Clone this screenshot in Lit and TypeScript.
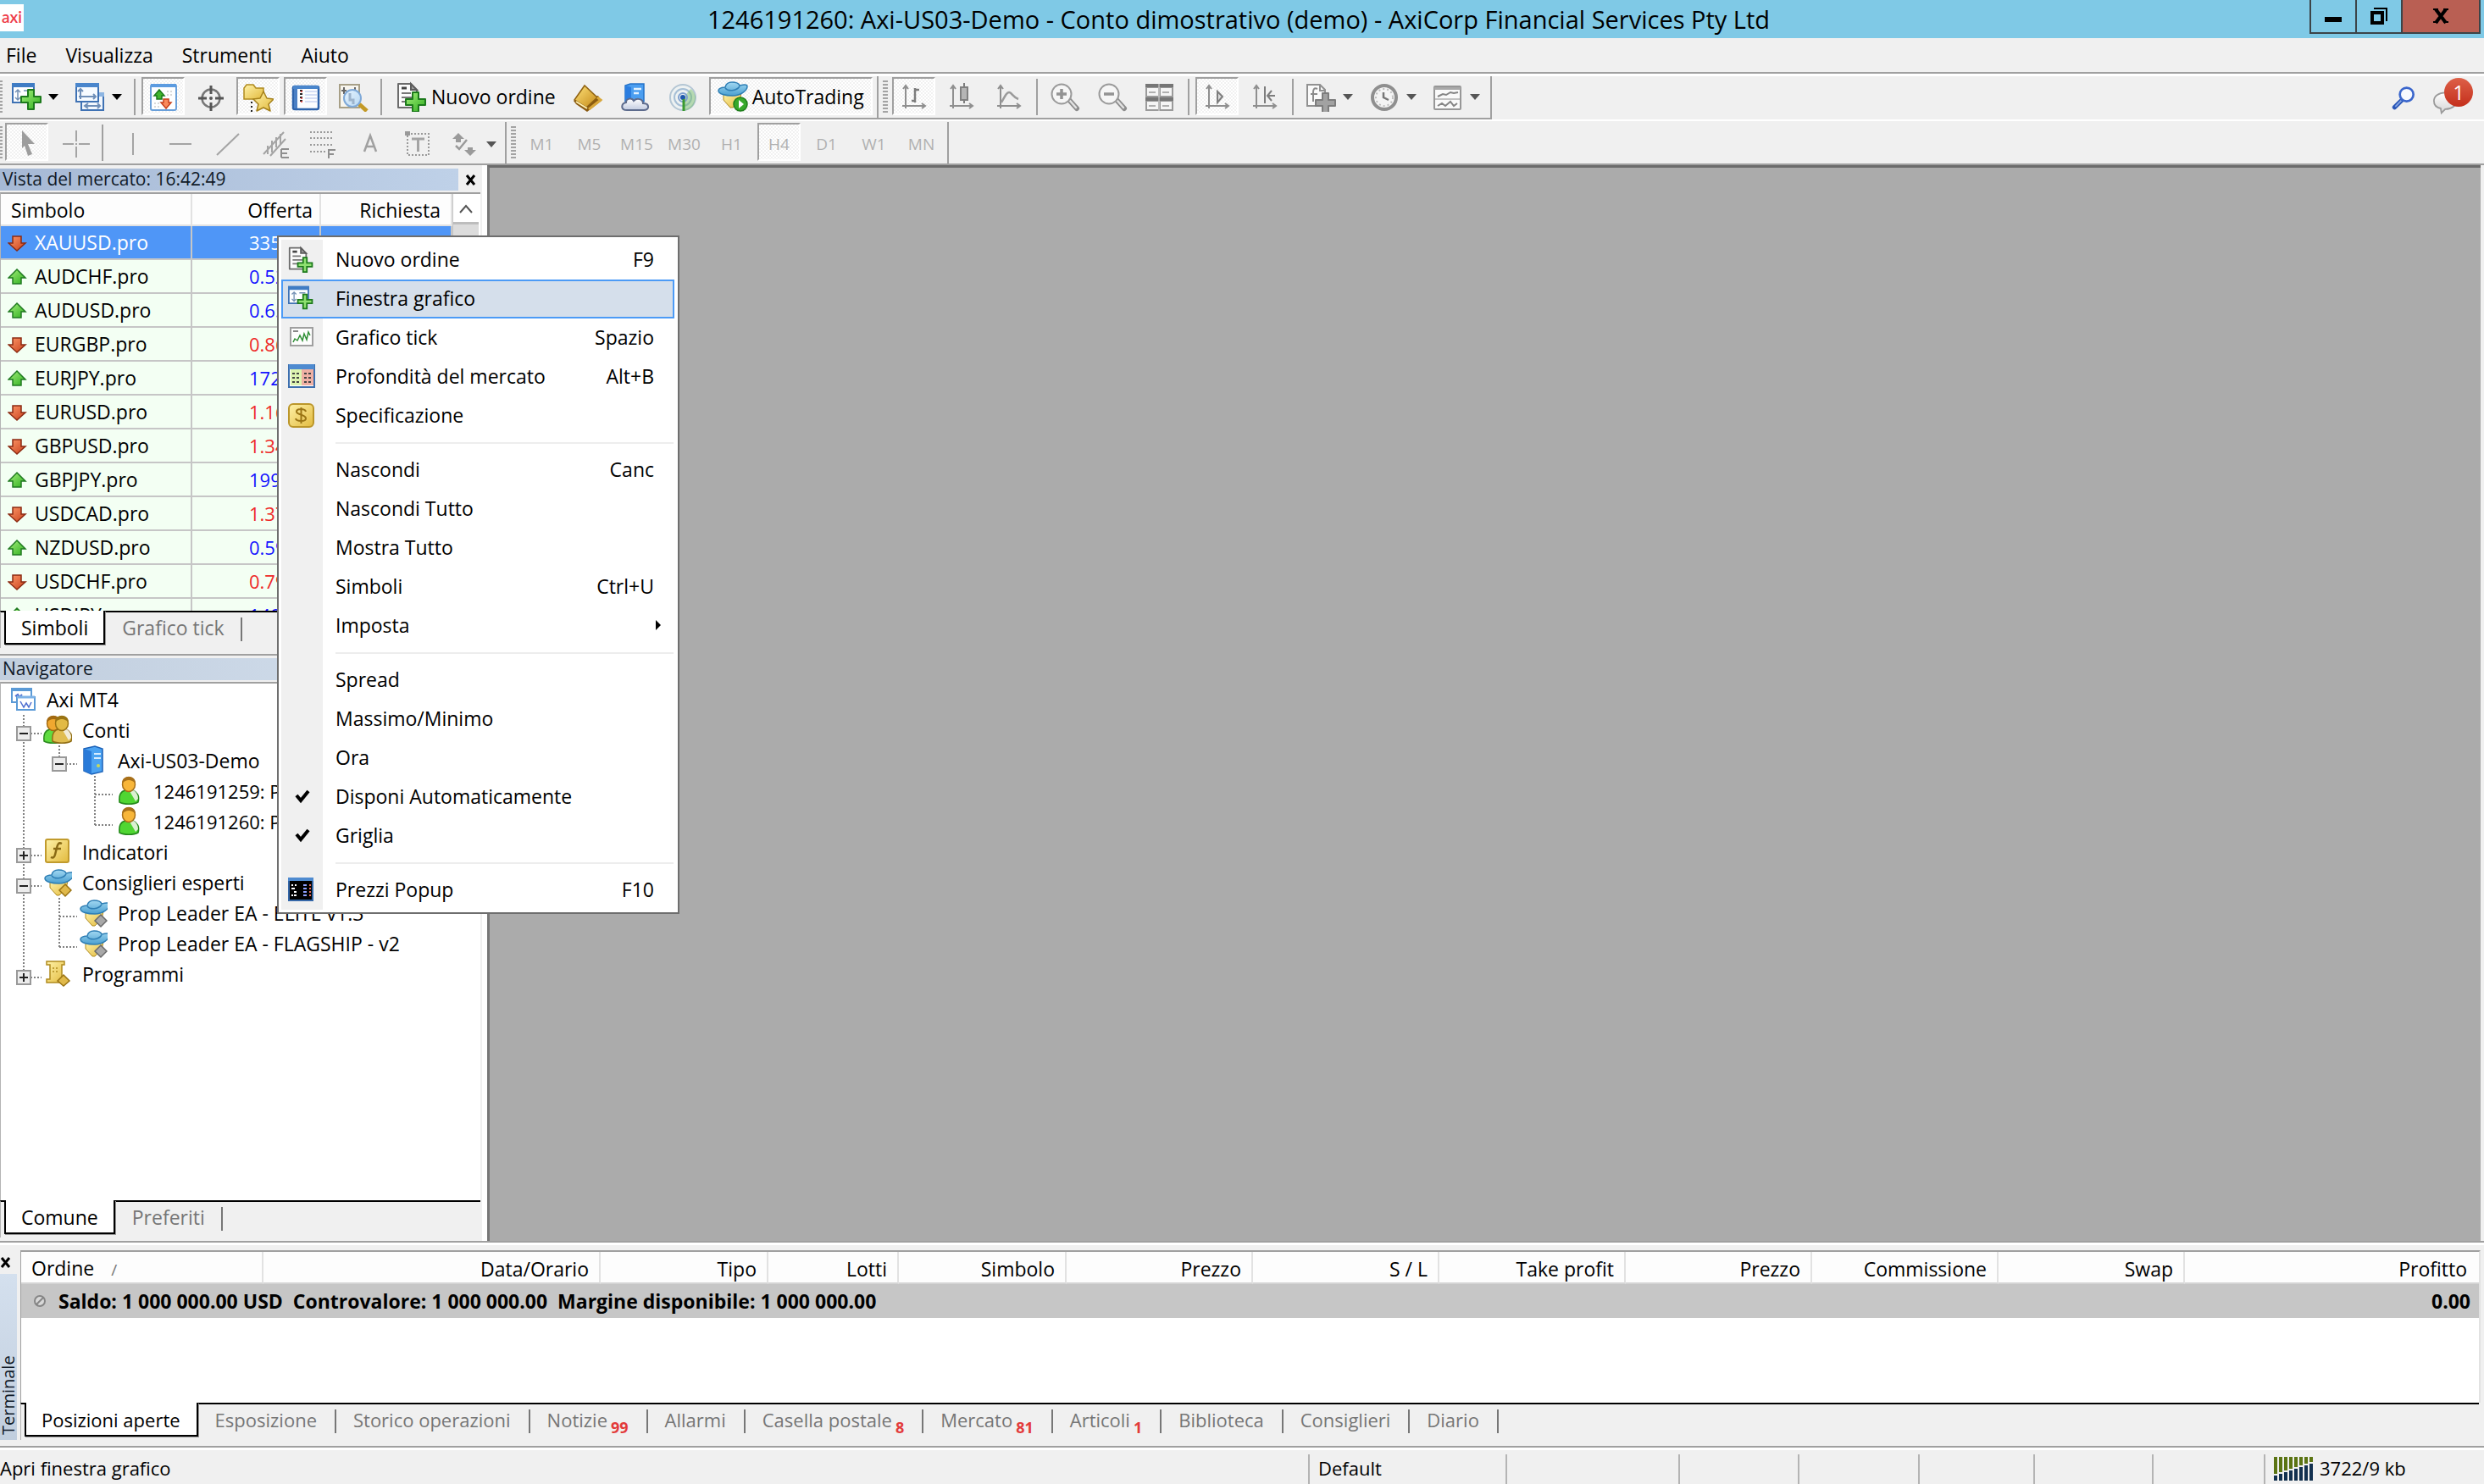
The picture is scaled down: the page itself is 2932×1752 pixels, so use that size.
import { LitElement, html, css, svg, nothing } from "lit";
import type { SVGTemplateResult } from "lit";
import { customElement, state } from "lit/decorators.js";
import { classMap } from "lit/directives/class-map.js";

type Art = SVGTemplateResult;

const plus = (x: number, y: number, fill = "url(#g-green)", line = "#1d7a1c") => svg`
  <path d="M${x + 8} ${y}h7v8h8v7h-8v8h-7v-8h-8v-7h8z" fill=${fill} stroke=${line} stroke-width="2" stroke-linejoin="round"/>`;

const hat = svg`
  <path d="M7 14h21l-2 9-8 8h-3l-8-9z" fill="url(#g-gold)" stroke="#b08a1e" stroke-width="1"/>
  <path d="M1 11c0-3 5-4 8-4 1-5 4-6 8-6s8 1 9 4c4-1 9-2 9 1 0 5-8 11-17 11S1 15 1 11z" fill="url(#g-hat)" stroke="#2f7fb5" stroke-width="1.5"/>
  <path d="M9 8c3 4 13 4 17-2" fill="none" stroke="#2f7fb5" stroke-width="1.5"/>`;

const person = (x: number, body: string, line: string, head: string, hair: string) => svg`
  <path d="M${x} 31c-1-9 2-13 7-14h9c5 2 8 7 6 14-5 3-17 3-22 0z" fill=${body} stroke=${line} stroke-width="1.5"/>
  <path d="M${x + 12} 18l7 12 3-3c0-4-2-8-5-10z" fill="#f4f4ee" opacity=".85"/>
  <ellipse cx=${x + 11} cy="10" rx="7.500" ry="8.500" fill=${head} stroke=${hair} stroke-width="1.500"/>
  <path d="M${x + 3} 9c0-6 4-8 8-8s8 2 8 8c-3-3-5-4-8-4s-5 1-8 4z" fill=${hair}/>`;

const axes = svg`<path d="M9 6v26M5 29h26M6 9l3-4 3 4M28 26l4 3-4 3" fill="none" stroke="#8f8f8f" stroke-width="2"/>`;

const glass = (inner: Art) => svg`
  <path d="M23 22l9 10" stroke="#8d8d8d" stroke-width="6" stroke-linecap="round"/>
  <path d="M24 23l7 8" stroke="#e2e2e2" stroke-width="2.500" stroke-linecap="round"/>
  <circle cx="14" cy="15" r="11.500" fill="#f6f6f6" stroke="#9b9b9b" stroke-width="2"/>${inner}`;

const doc = svg`
  <path d="M2 3h15l7 8v20H2z" fill="#fbfbfb" stroke="#6b6b6b" stroke-width="2" stroke-linejoin="round"/>
  <path d="M17 3v7h7z" fill="#9a9a9a" stroke="#5c5c5c" stroke-width="2"/>
  <path d="M6 8h6" stroke="#444" stroke-width="3"/><path d="M6 14h11M6 19h13M6 24h7" stroke="#777" stroke-width="2"/>`;

const ART: Record<string, Art> = {
  newChart: svg`
    <path d="M2 3h25v22H2z" fill="#fdfeff" stroke="#3f72b4" stroke-width="2"/><path d="M1 2h27v5H1z" fill="#3f7cc4"/>
    <path d="M8 10v12M5 13l3-3 3 3M5 19l3 3 3-3M15 11h8" fill="none" stroke="#7390b4" stroke-width="1.500"/>${plus(12, 10)}`,
  newChartSlim: svg`
    <path d="M1 3h26v22H1z" fill="#fdfeff" stroke="#3f72b4" stroke-width="2"/><path d="M0 2h28v5H0z" fill="#3f7cc4"/>
    <path d="M8 10v12M5 13l3-3 3 3M5 19l3 3 3-3M15 11h8" fill="none" stroke="#7390b4" stroke-width="1.500"/>
    <path d="M20 13h5v7h7v5h-7v7h-5v-7h-7v-5h7z" fill="#8fe070" stroke="#1d7a1c" stroke-width="2"/>`,
  orderSlim: svg`${doc}<path d="M20 16h5v7h7v5h-7v7h-5v-7h-7v-5h7z" fill="#8fe070" stroke="#1d7a1c" stroke-width="2"/>`,
  profiles: svg`
    <path d="M8 15h26v19H8z" fill="#f2f7fd" stroke="#3f72b4" stroke-width="2"/><path d="M29 13h6v5h-6z" fill="#8db5e2"/>
    <path d="M12 29h18M16 26l-4 3 4 3M27 26l3 3-3 3" fill="none" stroke="#6f8fb8" stroke-width="2"/>
    <path d="M2 3h26v21H2z" fill="#f7fbff" stroke="#3f72b4" stroke-width="2"/><path d="M1 2h28v5H1z" fill="#4a86cc"/>
    <path d="M7 9v12M5 18h20M22 15l3 3-3 3M4 12l3-3 3 3" fill="none" stroke="#6f8fb8" stroke-width="2"/>`,
  marketWatch: svg`
    <rect x="3" y="4" width="30" height="30" rx="2" fill="#fdfeff" stroke="#6aa0da" stroke-width="2"/><path d="M3 3h30v4H3z" fill="#5b9be0"/>
    <path d="M13 10l6 7h-3v4h-6v-4H7z" fill="#41b52d" stroke="#1c7a1a" stroke-width="1.500"/>
    <path d="M21 32l-6-7h3v-4h6v4h3z" fill="#fa8a5c" stroke="#c8401c" stroke-width="1.500"/>
    <path d="M22 12h8M22 16h8M7 26h6M7 30h6" stroke="#ccc" stroke-width="1.500" stroke-dasharray="2 2"/>`,
  crosshair: svg`
    <circle cx="18" cy="20" r="10.500" fill="none" stroke="#777" stroke-width="2.500"/>
    <path d="M18 5v10M18 25v10M3 20h10M23 20h10" stroke="#555" stroke-width="3"/><circle cx="18" cy="20" r="2" fill="#555"/>`,
  favorites: svg`
    <path d="M1 21V8l3-4h8l3 4h9v13z" fill="url(#g-gold)" stroke="#b08a1e" stroke-width="1.500"/>
    <path d="M10 24v12" stroke="#222" stroke-width="2" stroke-dasharray="2 3"/>
    <path d="M24 12l4 8 8 1-6 6 2 8-8-4-8 4 2-8-6-6 8-1z" fill="url(#g-gold)" stroke="#a5801a" stroke-width="1.500" stroke-linejoin="round"/>`,
  terminal: svg`
    <rect x="3" y="6" width="30" height="27" rx="2" fill="#fbfdff" stroke="#2d63ac" stroke-width="2.500"/><path d="M3 7h30" stroke="#4a86cc" stroke-width="4"/>
    <path d="M4 9h4v23H4z" fill="#4a7fc4"/>
    <path d="M11 11h3M11 15h3M11 19h3M11 23h3" stroke="#222" stroke-width="2"/><path d="M12 12h2M12 20h2M12 24h2" stroke="#e03030" stroke-width="1.500"/>
    <path d="M17 12h14M17 16h14M17 20h14M17 24h14" stroke="#c9d4f2" stroke-width="1.500"/>`,
  tester: svg`
    <path d="M2 4h23v27H2z" fill="#f7f5ee" stroke="#a79f86" stroke-width="2"/><path d="M7 7v8M4 11h6M20 7v8" stroke="#666" stroke-width="2"/>
    <path d="M25 27l9 8" stroke="#c39a28" stroke-width="5"/>
    <circle cx="17" cy="20" r="10" fill="url(#g-lens)" stroke="#7fa9d8" stroke-width="2"/><path d="M14 14v8h4v5" stroke="#9db4cc" stroke-width="3" fill="none"/>`,
  order: svg`${doc}${plus(11, 13)}`,
  metaEditor: svg`
    <path d="M1 23l3 4 13 9 17-13-4-6z" fill="#8a5a10"/><path d="M2 22L14 5l15 14-13 12z" fill="url(#g-gold2)" stroke="#8f6212" stroke-width="1.500"/>
    <path d="M4 24l13 8" stroke="#fff0b0" stroke-width="2"/><path d="M29 19l4 3-14 11" fill="none" stroke="#d9a83a" stroke-width="3"/>`,
  cloud: svg`
    <path d="M6 5l6-2h16v21H6z" fill="#4b9ef0" stroke="#2372c8" stroke-width="1.500"/><path d="M6 5l7 2v17H6z" fill="#2a7de0"/>
    <path d="M16 9h9M16 14h6" stroke="#e2f2ff" stroke-width="2.500"/>
    <path d="M8 34c-8 0-7-8-1-9 0-5 7-6 9-2 4-4 11-2 11 3 8 0 8 8 1 8z" fill="url(#g-cloud)" stroke="#5d6b8c" stroke-width="2"/>`,
  signal: svg`
    <circle cx="18" cy="19" r="15" fill="#eef2f2" stroke="#b4c6d4" stroke-width="2"/><circle cx="18" cy="19" r="10" fill="none" stroke="#a6bfd6" stroke-width="2"/>
    <path d="M19 19v16c9-1 14-8 14-17-2-6-4-8-6-9z" fill="#6fbb62" opacity=".45"/>
    <circle cx="18" cy="19" r="5" fill="none" stroke="#7d9fcf" stroke-width="2"/><circle cx="18" cy="19" r="3" fill="#1f58ad"/><path d="M19 21v14" stroke="#3a9a2e" stroke-width="3"/>`,
  autoTrading: svg`${hat}
    <circle cx="27" cy="27" r="8" fill="#37a92c" stroke="#1e7d1b" stroke-width="1.500"/><path d="M25 22v10l6-5z" fill="#fff"/>`,
  bars: svg`${axes}<path d="M20 8v17M20 10h5M16 23h4" stroke="#7d7d7d" stroke-width="2.500"/>`,
  candles: svg`${axes}<path d="M22 2v24" stroke="#7d7d7d" stroke-width="2"/><rect x="18" y="7" width="8" height="15" fill="#b5b5b5" stroke="#808080" stroke-width="2"/>`,
  lineChart: svg`${axes}<path d="M10 25c4-7 6-12 9-12s5 6 11 8" fill="none" stroke="#9a9a9a" stroke-width="2.500"/>`,
  zoomIn: glass(svg`<path d="M8 15h12M14 9v12" stroke="#939393" stroke-width="3.500"/>`),
  zoomOut: glass(svg`<path d="M8 15h12" stroke="#939393" stroke-width="3.500"/>`),
  tile: svg`<path d="M1 3h33v32H1z" fill="#9a9a9a"/><path d="M1 3h33v4H1zM1 19h33v4H1z" fill="#767676"/><path d="M3 8h13v9H3zM19 8h13v9H19zM3 24h13v9H3zM19 24h13v9H19z" fill="#f5f5f5"/><path d="M17 3v32" stroke="#dcdcdc" stroke-width="1"/><path d="M5 13h8M21 13h8M5 29h8M21 29h8" stroke="#b0b0b0" stroke-width="2"/>`,
  autoScroll: svg`${axes}<path d="M19 12v13l6-7z" fill="#ddd" stroke="#7d7d7d" stroke-width="2"/>`,
  chartShift: svg`${axes}<path d="M19 6v20M31 17H22M27 11l-5 6 5 6" fill="none" stroke="#7d7d7d" stroke-width="2"/>`,
  indicators: svg`
    <path d="M2 4h15l6 6v19H2z" fill="#fafafa" stroke="#919191" stroke-width="2"/><path d="M17 4v7h6" fill="none" stroke="#919191" stroke-width="2"/>
    <path d="M14 9c-4-2-5 1-5 4v11M6 15h8" fill="none" stroke="#8a8a8a" stroke-width="2"/>${plus(12, 14, "#a2a2a2", "#7d7d7d")}`,
  clock: svg`<circle cx="18" cy="19" r="14" fill="#f4f4f4" stroke="#8f8f8f" stroke-width="4"/><circle cx="18" cy="19" r="10" fill="none" stroke="#bdbdbd" stroke-width="2" stroke-dasharray="2 3"/><path d="M17 13v6l6 3" fill="none" stroke="#777" stroke-width="2.500"/>`,
  template: svg`<rect x="2" y="6" width="31" height="27" rx="1" fill="#fafafa" stroke="#979797" stroke-width="2"/><path d="M2 7h31v3H2z" fill="#a9a9a9"/><path d="M3 21h29" stroke="#c3c3c3" stroke-width="2"/><path d="M6 18l6-3 4 1 5-3 4 1 5-1M6 29l5-3 4 3 6-5 4 5 4-3" fill="none" stroke="#858585" stroke-width="2"/>`,
  cursor: svg`<path d="M10 2l15 16h-8l5 12-5 2-4-12-3 3z" fill="#9d9d9d"/>`,
  cross: svg`<path d="M18 2v13M18 21v13M2 18h13M21 18h13M17 18h2" stroke="#a4a4a4" stroke-width="2"/>`,
  vline: svg`<path d="M18 5v26" stroke="#a4a4a4" stroke-width="2"/>`,
  hline: svg`<path d="M5 18h26" stroke="#a4a4a4" stroke-width="2"/>`,
  trend: svg`<path d="M5 31L31 6" stroke="#a4a4a4" stroke-width="2"/>`,
  channel: svg`<path d="M4 30L28 4M12 32L30 12M9 20v10M14 14v14M19 10v12M24 6v12" stroke="#a4a4a4" stroke-width="2"/>
    <path d="M25 24h9M25 24v10M25 29h7M25 34h9" stroke="#8f8f8f" stroke-width="2" fill="none"/>`,
  fibo: svg`<path d="M3 4h28M3 11h28M3 19h28M3 27h18" stroke="#9a9a9a" stroke-width="2" stroke-dasharray="2 2"/><path d="M25 35V25h8M25 30h6" fill="none" stroke="#8f8f8f" stroke-width="2"/>`,
  text: svg`<path d="M11 27l7-19 7 19M13 21h10" fill="none" stroke="#a0a0a0" stroke-width="2.500"/>`,
  label: svg`<path d="M6 6h25v25H6z" fill="none" stroke="#9a9a9a" stroke-width="2" stroke-dasharray="2 2"/><path d="M11 12h15M18.500 12v15" stroke="#a4a4a4" stroke-width="3"/><path d="M3 3h6v5H3z" fill="#999"/>`,
  shapes: svg`<path d="M11 5l7 7h-4v4H8v-4H4zM25 32l-7-7h4v-3h6v3h4z" fill="#9a9a9a"/><path d="M8 20l4 4 9-11" fill="none" stroke="#9a9a9a" stroke-width="2.500"/>`,
  search: svg`<path d="M5 30l10-10" stroke="#2a57b8" stroke-width="6" stroke-linecap="round"/><path d="M6 29l8-8" stroke="#86a6e4" stroke-width="2"/><circle cx="21" cy="13" r="9" fill="#f6f8fe" stroke="#3a66cc" stroke-width="3"/>`,
  chat: svg`<path d="M16 6c9 0 15 5 15 11s-6 11-15 11l-5 5-1-6C4 26 1 22 1 17 1 11 7 6 16 6z" fill="url(#g-chat)" stroke="#9a9a9a" stroke-width="2"/>`,
  tick: svg`<rect x="3" y="7" width="26" height="21" fill="#fdfdfd" stroke="#9f9f9f" stroke-width="2"/><path d="M6 11h6" stroke="#888" stroke-width="2"/><path d="M6 24l2-4 3 2 3-6 3 6 2-8 3 7 2-9 2 4" fill="none" stroke="#2f8f35" stroke-width="1.500"/>`,
  depth: svg`<rect x="1" y="5" width="30" height="26" fill="#fff" stroke="#3d6fae" stroke-width="2"/><path d="M1 4h30v6H1z" fill="#4f8bd0"/><path d="M3 10h13v19H3z" fill="#dcf3b0"/><path d="M16 10h14v19H16z" fill="#efb0a4"/>
    <path d="M5 15h9M5 20h9M5 25h9M19 15h9M19 20h9M19 25h9" stroke="#444" stroke-width="2" stroke-dasharray="3 2"/>`,
  spec: svg`<rect x="1" y="5" width="29" height="27" rx="5" fill="url(#g-gold)" stroke="#bb962a" stroke-width="2"/><path d="M21 14c-1-4-11-4-11 0 0 4 11 3 11 8 0 4-11 4-12 0M15.500 9v19" fill="none" stroke="#9a7414" stroke-width="2"/>`,
  popup: svg`<rect x="1" y="5" width="28" height="26" fill="#000" stroke="#3567a8" stroke-width="2"/><path d="M0 4h30v4H0z" fill="#4f8bd0"/><path d="M4 13h2M8 13h2M4 17h4M7 21h3M4 25h2M7 25h3" stroke="#fff" stroke-width="2"/><path d="M18 13h4M18 17h4M18 21h4M18 25h4" stroke="#8ea2ff" stroke-width="2"/><path d="M25 13h2M25 17h2M25 21h2M25 25h2" stroke="#e06a5a" stroke-width="2"/>`,
  check: svg`<path d="M10 17l5 6 9-11" fill="none" stroke="#000" stroke-width="4"/>`,
  axi: svg`<path d="M7 5h23v16H7z" fill="#fff" stroke="#5b9ad6" stroke-width="2"/><path d="M7 6h23" stroke="#5b9ad6" stroke-width="4"/><path d="M11 14l3-2 2 3 3-3" fill="none" stroke="#4f6fd0" stroke-width="2"/>
    <path d="M13 15h21v15H13z" fill="#fff" stroke="#5b9ad6" stroke-width="2"/><path d="M13 15h21" stroke="#7db2e6" stroke-width="3"/><path d="M17 20l4 7 3-5 3 5 3-6" fill="none" stroke="#4f6fd0" stroke-width="1.500"/>`,
  accounts: svg`${person(3, "#5fdc40", "#2b8a1e", "#f0a830", "#a36a12")}${person(13, "#e0bd50", "#8f6c14", "#e2ba45", "#9a7414")}`,
  server: svg`<path d="M8 4l13-3 9 3v27l-13 3-9-4z" fill="#4ba3f2" stroke="#1c62b8" stroke-width="1.500"/><path d="M8 4l9 3v27l-9-4z" fill="#2a7ad8"/><path d="M20 10h8M20 15h8" stroke="#d6ecff" stroke-width="2"/><circle cx="25" cy="24" r="2" fill="#c8d85a"/>`,
  user: svg`${person(8, "#4fd632", "#23871a", "#f8b63a", "#a8701a")}`,
  func: svg`<rect x="5" y="3" width="27" height="27" rx="2" fill="url(#g-gold)" stroke="#c19b2d" stroke-width="2"/><path d="M24 8c-4-2-5 1-6 5l-2 8c-1 4-3 4-5 3M14 14h9" fill="none" stroke="#8a6a14" stroke-width="2.500"/>`,
  expert: svg`<g transform="translate(3 2)">${hat}</g><path d="M28 20l7 7-7 7-7-7z" fill="#e0b94a" stroke="#9a7414" stroke-width="1.500"/>`,
  expertOff: svg`<g transform="translate(3 2)">${hat}</g><path d="M28 20l7 7-7 7-7-7z" fill="#a8a8a8" stroke="#6a6a6a" stroke-width="1.500"/>`,
  script: svg`<path d="M6 3h21v4h-3v17h4v4H6v-4h4V7H6z" fill="url(#g-gold)" stroke="#b08a1e" stroke-width="1.500"/><path d="M13 11h8M13 15h8" stroke="#b08a1e" stroke-width="1.500" stroke-dasharray="2 2"/><path d="M26 19l7 7-7 6-7-6z" fill="#e0b94a" stroke="#9a7414" stroke-width="1.500"/>`,
  up: svg`<path d="M11 3l10 10h-5v7H6v-7H1z" fill="url(#g-green)" stroke="#1f7a20" stroke-width="1.500"/>`,
  down: svg`<path d="M11 21L1 12h5V4h10v8h5z" fill="url(#g-red)" stroke="#8c2a12" stroke-width="1.500"/>`,
};

interface Tool { icon?: string; label: string; text?: string; pressed?: boolean; split?: boolean; sep?: boolean; }
const T = (icon: string, label: string, more: Partial<Tool> = {}): Tool => ({ icon, label, ...more });
const SEP: Tool = { label: "", sep: true };

const STANDARD: Tool[] = [
  T("newChart", "Nuovo grafico", { split: true }), T("profiles", "Profili", { split: true }), SEP,
  T("marketWatch", "Vista del mercato", { pressed: true }), T("crosshair", "Finestra dati"),
  T("favorites", "Navigatore", { pressed: true }), T("terminal", "Terminale", { pressed: true }), T("tester", "Tester"), SEP,
  T("order", "Nuovo ordine", { text: "Nuovo ordine" }), T("metaEditor", "MetaEditor"), T("cloud", "Hosting"), T("signal", "Segnali"),
  T("autoTrading", "AutoTrading", { text: "AutoTrading", pressed: true }),
];
const CHARTS: Tool[] = [
  T("bars", "Barre", { pressed: true }), T("candles", "Candele"), T("lineChart", "Linea"), SEP,
  T("zoomIn", "Ingrandisci"), T("zoomOut", "Riduci"), T("tile", "Affianca"), SEP,
  T("autoScroll", "Scorrimento", { pressed: true }), T("chartShift", "Spostamento"), SEP,
  T("indicators", "Indicatori", { split: true }), T("clock", "Periodi", { split: true }), T("template", "Modelli", { split: true }),
];
const DRAWING: Tool[] = [
  T("cursor", "Cursore", { pressed: true }), T("cross", "Mirino"), SEP, T("vline", "Linea verticale"), T("hline", "Linea orizzontale"),
  T("trend", "Trendline"), T("channel", "Canale"), T("fibo", "Fibonacci"), T("text", "Testo"), T("label", "Etichetta"), T("shapes", "Frecce", { split: true }),
];
const PERIODS = ["M1", "M5", "M15", "M30", "H1", "H4", "D1", "W1", "MN"];

const QUOTES: [string, "up" | "down", string][] = [
  ["XAUUSD.pro", "down", "3357.42"], ["AUDCHF.pro", "up", "0.52384"], ["AUDUSD.pro", "up", "0.65712"], ["EURGBP.pro", "down", "0.86421"],
  ["EURJPY.pro", "up", "172.348"], ["EURUSD.pro", "down", "1.16415"], ["GBPUSD.pro", "down", "1.34682"], ["GBPJPY.pro", "up", "199.421"],
  ["USDCAD.pro", "down", "1.37184"], ["NZDUSD.pro", "up", "0.59612"], ["USDCHF.pro", "down", "0.79548"], ["USDJPY.pro", "up", "148.073"],
];

type Cell = "pass" | "blank" | "tee" | "end" | "minus" | "plus" | "minusLast" | "plusLast";
const TREE: { cells: Cell[]; icon: string; text: string }[] = [
  { cells: [], icon: "axi", text: "Axi MT4" },
  { cells: ["minus"], icon: "accounts", text: "Conti" },
  { cells: ["pass", "minusLast"], icon: "server", text: "Axi-US03-Demo" },
  { cells: ["pass", "blank", "tee"], icon: "user", text: "1246191259: P" },
  { cells: ["pass", "blank", "end"], icon: "user", text: "1246191260: P" },
  { cells: ["plus"], icon: "func", text: "Indicatori" },
  { cells: ["minus"], icon: "expert", text: "Consiglieri esperti" },
  { cells: ["pass", "tee"], icon: "expertOff", text: "Prop Leader EA - ELITE v1.3" },
  { cells: ["pass", "end"], icon: "expertOff", text: "Prop Leader EA - FLAGSHIP - v2" },
  { cells: ["plusLast"], icon: "script", text: "Programmi" },
];

interface Entry { text: string; key?: string; icon?: string; size?: number; sub?: boolean; active?: boolean; }
const MENU: (Entry | null)[] = [
  { text: "Nuovo ordine", key: "F9", icon: "orderSlim", size: 32 }, { text: "Finestra grafico", icon: "newChartSlim", size: 32, active: true },
  { text: "Grafico tick", key: "Spazio", icon: "tick" }, { text: "Profondità del mercato", key: "Alt+B", icon: "depth" },
  { text: "Specificazione", icon: "spec" }, null,
  { text: "Nascondi", key: "Canc" }, { text: "Nascondi Tutto" }, { text: "Mostra Tutto" }, { text: "Simboli", key: "Ctrl+U" }, { text: "Imposta", sub: true }, null,
  { text: "Spread" }, { text: "Massimo/Minimo" }, { text: "Ora" }, { text: "Disponi Automaticamente", icon: "check" }, { text: "Griglia", icon: "check" }, null,
  { text: "Prezzi Popup", key: "F10", icon: "popup" },
];

const COLUMNS = ["Ordine", "Data/Orario", "Tipo", "Lotti", "Simbolo", "Prezzo", "S / L", "Take profit", "Prezzo", "Commissione", "Swap", "Profitto"];
const TABS: [string, string?][] = [
  ["Posizioni aperte"], ["Esposizione"], ["Storico operazioni"], ["Notizie", "99"], ["Allarmi"], ["Casella postale", "8"],
  ["Mercato", "81"], ["Articoli", "1"], ["Biblioteca"], ["Consiglieri"], ["Diario"],
];

@customElement("app-root")
export class AppRoot extends LitElement {
  @state() private marketTab = 0;
  @state() private navTab = 0;
  @state() private terminalTab = 0;

  static styles = css`
    :host { display: flex; flex-direction: column; position: relative; min-height: 100vh; overflow: hidden; background: #f0f0f0; color: #000;
      font: 23px/30px "Open Sans", "Noto Sans", sans-serif; }
    * { box-sizing: border-box; }
    button { font: inherit; color: inherit; background: none; border: 0; padding: 0; margin: 0; text-align: left; white-space: nowrap; }
    svg { display: block; flex: none; }
    .defs { position: absolute; width: 0; height: 0; }
    .title { height: 45px; display: flex; background: #7fc9e6; flex: none; }
    .brand { width: 28px; height: 32px; margin-top: 5px; background: #fff; color: #ee3a48; font: 600 19px/30px Lato, sans-serif; text-align: right; padding-right: 2px; overflow: hidden; }
    .title h1 { flex: 1; margin: 0; padding-left: 170px; text-align: center; font-size: 29px; font-weight: 400; line-height: 46px; }
    .winbtns { display: flex; height: 40px; margin-right: 4px; border: 2px solid #3c4448; border-top: 0; }
    .winbtns button { display: flex; justify-content: center; align-items: center; width: 54px; border-right: 2px solid #3c4448; }
    .winbtns .close { width: 90px; background: #b95f53; border-right: 0; }
    .menubar { display: flex; gap: 34px; height: 42px; padding-left: 7px; border-bottom: 2px solid #a0a0a0; flex: none; align-items: center; }
    .bars { display: flex; flex-direction: column; flex: none; border-top: 3px solid #fff; border-bottom: 2px solid #a0a0a0; }
    .row { display: flex; }
    .row.second { border-top: 2px solid #fff; }
    .bar { display: flex; gap: 5px; height: 51px; padding: 1px 0 3px; border-bottom: 2px solid #a0a0a0; }
    .second .bar { border-bottom: 0; height: 50px; padding-top: 2px; }
    .grip { width: 6px; margin: 4px 0 3px; background: repeating-linear-gradient(#a3a3a3 0 2px, #f0f0f0 2px 4px); }
    .grip.first { width: 3px; margin-right: -2px; }
    .endline { width: 2px; margin: -1px 0 -3px; background: #a0a0a0; }
    .sep { width: 2px; margin: 2px 2px 0; background: #a0a0a0; }
    .tool { display: flex; align-items: center; justify-content: center; width: 51px; height: 45px; }
    .second .tool { padding: 4px 0 0 4px; }
    .tool.wide { width: auto; padding: 0 8px; gap: 5px; border-left: 2px solid transparent; }
    .tool.pressed { border: 2px solid #fff; border-top-color: #a0a0a0; border-left-color: #a0a0a0; background: repeating-conic-gradient(#fff 0 25%, #f1f1f1 0 50%) 0 0 / 4px 4px; }
    .split { display: flex; width: 70px; padding-left: 7px; align-items: center; gap: 8px; }
    .second .split { padding: 4px 0 0 9px; }
    .split .caret { width: 12px; height: 45px; display: flex; align-items: center; }
    .second .period { font-size: 19px; color: #b0b0b0; padding-left: 0; }
    .utility { display: flex; margin-left: auto; gap: 18px; padding-right: 28px; align-items: center; }
    .bubble { position: relative; padding-top: 8px; }
    .badge { position: absolute; left: 13px; top: -4px; width: 34px; height: 34px; border-radius: 50%; background: linear-gradient(#dd6048, #c42f1b); color: #fff; text-align: center; font-size: 23px; line-height: 34px; }
    .main { display: flex; flex: 1; min-height: 0; }
    .side { display: flex; flex-direction: column; width: 575px; flex: none; border-right: 6px solid #fff; }
    .work { flex: 1; margin-right: 4px; background: #ababab; border-top: 3px solid #6b6b6b; border-left: 3px solid #777; }
    .pane { display: flex; flex-direction: column; }
    .market { height: 577px; flex: none; padding: 4px 0 7px; }
    .nav { flex: 1; border-top: 2px solid #a0a0a0; padding: 3px 0 4px; }
    .cap { display: flex; height: 28px; padding-bottom: 2px; flex: none; }
    .cap h2 { flex: 1; margin: 0; padding-left: 3px; font-size: 21px; font-weight: 400; line-height: 25px; background: linear-gradient(90deg, #a6b9d5, #bfd1e8); color: #101a28; }
    .nav .cap h2 { background: linear-gradient(90deg, #c1cede, #d4e0ee); }
    .cap button { width: 28px; display: flex; align-items: center; justify-content: center; }
    .frame { flex: 1; min-height: 0; overflow: hidden; display: flex; background: #fff; border-top: 2px solid #a0a0a0; border-left: 1px solid #b4b4b4; margin-right: 2px; }
    table { border-collapse: separate; border-spacing: 0; table-layout: fixed; }
    th { font-weight: 400; text-align: right; background: #fdfdfd; padding: 0 12px; border-right: 2px solid #e2e2e2; white-space: nowrap; }
    th:first-child { text-align: left; }
    .quotes { flex: 1; width: 100%; align-self: flex-start; }
    .quotes th { height: 38px; padding-top: 2px; border-bottom: 2px solid #e2e2e2; }
    .quotes th:nth-child(2) { padding-right: 8px; }
    .quotes td { height: 40px; padding: 0; background: #f3fff3; border-right: 2px solid #c6c6c6; border-bottom: 2px solid #c6c6c6; overflow: hidden; line-height: 28px; }
    .quotes .bid { padding-left: 67px; font-size: 22px; }
    .quotes .sym { display: flex; align-items: center; gap: 9px; padding-left: 8px; }
    .quotes .selected td { background: #4f96f7; color: #fff; }
    .bid.up { color: #1414ff; } .bid.down { color: #ee2a2a; }
    .quotes .c1 { width: 226px; } .quotes .c2 { width: 152px; }
    .scroll { width: 33px; background: #dcdcdc; border-left: 1px solid #c4c4c4; border-right: 2px solid #fff; }
    .scroll button { display: flex; align-items: center; justify-content: center; width: 100%; height: 36px; background: #fff; border-bottom: 3px solid #bdbdbd; }
    .tabs { display: flex; height: 44px; flex: none; padding-left: 4px; border-top: 2px solid #000; margin-right: 2px; border-left: 1px solid #b4b4b4; }
    .tab { display: flex; height: 28px; margin-top: 6px; padding: 0 19px 0 20px; line-height: 24px; align-items: flex-start; color: #767676; border-right: 2px solid #777; }
    .tab.active { height: 40px; margin-top: -2px; padding: 8px 18px 0; background: #fff; color: #000; border: 2px solid #000; border-top: 0; box-shadow: 1px 1px 0 #999; }
    .terminal .tab { font-size: 22px; padding: 0 21px 0 20px; }
    .terminal .tab.active { padding: 8px 19px 0 18px; }
    .tab sub { margin: 0 0 0 4px; align-self: flex-end; color: #e33b3b; font-size: 18px; font-weight: 700; line-height: 14px; }
    .tree { flex: 1; padding: 1px 0 0 6px; }
    .node { display: flex; height: 36px; white-space: nowrap; }
    .node .pic { width: 48px; }
    .node .txt { line-height: 36px; }
    .node .account { font-size: 22px; }
    .terminal { display: flex; flex: none; border-top: 2px solid #a0a0a0; padding: 9px 4px 7px 0; box-shadow: inset 0 3px #fff; }
    .spine { display: flex; flex-direction: column; align-items: flex-start; width: 24px; }
    .spine button { height: 28px; width: 13px; display: flex; align-items: center; justify-content: center; }
    .spine h2 { flex: 1; margin: 0; width: 20px; font-size: 20px; font-weight: 400; line-height: 20px; writing-mode: vertical-rl; transform: rotate(180deg); padding-top: 6px; background: linear-gradient(#c1cede, #d4e0ee); color: #101a28; }
    .body { flex: 1; min-width: 0; }
    .orders { background: #fff; border: 2px solid #a0a0a0; border-width: 2px 2px 0 1px; border-right-color: #e2e2e2; min-height: 180px; }
    .orders table { width: 100%; }
    .orders th { height: 38px; padding-top: 3px; border-bottom: 2px solid #d4d4d4; }
    .orders th:last-child { border-right: 0; padding-right: 14px; }
    .orders td { height: 40px; background: #c6c6c6; font-weight: 700; padding: 0 10px 0 14px; white-space: pre; }
    .orders td:last-child { text-align: right; }
    .sum { display: flex; align-items: center; gap: 14px; }
    .sort { margin-left: 20px; color: #777; font-size: 19px; }
    .w0 { width: 286px; } .w1 { width: 398px; } .w2 { width: 198px; } .w3 { width: 154px; } .w4 { width: 198px; } .w5 { width: 220px; }
    .status { display: flex; height: 45px; flex: none; border-top: 2px solid #a0a0a0; box-shadow: inset 0 3px #fff; padding-top: 8px; line-height: 33px; font-size: 22px; }
    .status .hint { flex: 1; }
    .status .slot { border-left: 2px solid #b4b4b4; padding-left: 10px; display: flex; gap: 7px; }
    .status .slot svg { margin-top: 3px; }
    .s0 { width: 233px; } .s1 { width: 204px; } .s2 { width: 141px; } .s3 { width: 142px; } .s4 { width: 136px; } .s5 { width: 140px; } .s6 { width: 132px; } .s7 { width: 260px; }
    .context { position: absolute; left: 327px; top: 278px; width: 475px; padding: 4px 4px 3px 3px; border: 2px solid #6e6e6e; background: linear-gradient(#f0f0f0, #f0f0f0) 3px 3px / 49px calc(100% - 6px) no-repeat #fff; box-shadow: inset 0 0 0 1px #fff; }
    .entry { display: flex; align-items: center; width: 100%; height: 46px; padding: 0 0 2px 8px; }
    .entry.active { background: #d5dfeb; border: 2px solid #4c9bf6; padding: 0 0 2px 6px; }
    .entry .ico { width: 56px; height: 36px; display: flex; align-items: center; }
    .entry .key { margin-left: auto; padding-right: 24px; }
    .entry .arrow { margin-left: auto; padding-right: 15px; }
    .line { height: 2px; margin: 8px 1px 8px 64px; border: 0; background: #ededed; }
  `;

  private icon(name: string, size = 36, box = size) {
    return html`<svg width=${size} height=${size} viewBox="0 0 ${box} ${box}" aria-hidden="true">${ART[name]}</svg>`;
  }

  private tool(t: Tool) {
    if (t.sep) return html`<span class="sep"></span>`;
    if (t.split) return html`<div class="split"><button aria-label=${t.label}>${this.icon(t.icon!)}</button>
      <button class="caret" aria-label="${t.label}, altro"><svg width="12" height="8"><path d="M0 1h12L6 8z" fill=${t.icon === "newChart" || t.icon === "profiles" ? "#000" : "#555"}/></svg></button></div>`;
    return html`<button class=${classMap({ tool: true, pressed: !!t.pressed, wide: !!t.text })} aria-label=${t.label}>${this.icon(t.icon!)}${t.text ? html`<span>${t.text}</span>` : nothing}</button>`;
  }

  private cell(c: Cell) {
    const toggle = /^(minus|plus)/.test(c);
    const down = c === "pass" || c === "tee" || c === "minus" || c === "plus";
    const art = html`<svg width="42" height="36" aria-hidden="true">
      ${c !== "blank" ? svg`<path d=${"M21 0V" + (down ? 36 : 22)} stroke="#808080" stroke-width="2" stroke-dasharray="2 2"/>` : nothing}
      ${c !== "blank" && c !== "pass" ? svg`<path d="M21 22h21" stroke="#808080" stroke-width="2" stroke-dasharray="2 2"/>` : nothing}
      ${toggle ? svg`<rect x="13" y="14" width="16" height="16" fill="#ececec" stroke="#999" stroke-width="2"/><path d=${"M16 22h10" + (c.startsWith("plus") ? "M21 17v10" : "")} stroke="#222" stroke-width="2"/>` : nothing}</svg>`;
    return toggle ? html`<button aria-label="Espandi o comprimi">${art}</button>` : art;
  }

  private tabs(items: [string, string?][], current: number, pick: (i: number) => void) {
    return html`<div class="tabs" role="tablist">${items.map(([name, n], i) => html`<button role="tab" aria-selected=${i === current ? "true" : "false"}
      class=${classMap({ tab: true, active: i === current })} @click=${() => pick(i)}>${name}${n ? html`<sub>${n}</sub>` : nothing}</button>`)}</div>`;
  }

  private cross(size = 13) {
    return html`<svg width=${size} height=${size} viewBox="0 0 13 13" aria-hidden="true"><path d="M2 1l9 11M11 1L2 12" stroke="#000" stroke-width="3"/></svg>`;
  }

  render() {
    return html`
      <svg class="defs" aria-hidden="true"><defs>
        <linearGradient id="g-green" x2="1" y2="1"><stop stop-color="#a6f07c"/><stop offset="1" stop-color="#2fae1f"/></linearGradient>
        <linearGradient id="g-red" x2="1" y2="1"><stop stop-color="#ff9a6a"/><stop offset="1" stop-color="#c8401c"/></linearGradient>
        <linearGradient id="g-gold" x2="1" y2="1"><stop stop-color="#fff2a8"/><stop offset="1" stop-color="#e2ba3e"/></linearGradient>
        <linearGradient id="g-gold2" x2="1" y2="1"><stop stop-color="#ffe27a"/><stop offset="1" stop-color="#c48a18"/></linearGradient>
        <linearGradient id="g-hat" x2="0" y2="1"><stop stop-color="#a2d8f2"/><stop offset="1" stop-color="#4a9fd0"/></linearGradient>
        <linearGradient id="g-lens" x2="1" y2="1"><stop stop-color="#e6f4ff"/><stop offset="1" stop-color="#b8d8f2"/></linearGradient>
        <linearGradient id="g-cloud" x2="0" y2="1"><stop stop-color="#fff"/><stop offset="1" stop-color="#c2cbe0"/></linearGradient>
        <linearGradient id="g-chat" x2="0" y2="1"><stop stop-color="#fff"/><stop offset="1" stop-color="#d4d4d4"/></linearGradient>
      </defs></svg>

      <header class="title"><span class="brand">axi</span><h1>1246191260: Axi-US03-Demo - Conto dimostrativo (demo) - AxiCorp Financial Services Pty Ltd</h1>
        <div class="winbtns">
          <button aria-label="Riduci a icona"><svg width="22" height="22"><path d="M1 15h20" stroke="#000" stroke-width="6"/></svg></button>
          <button aria-label="Ripristina"><svg width="22" height="22"><path d="M5 2h15v15" fill="none" stroke="#000" stroke-width="2"/><rect x="3" y="7" width="12" height="12" fill="none" stroke="#000" stroke-width="4"/></svg></button>
          <button class="close" aria-label="Chiudi"><svg width="20" height="20"><path d="M4 2l12 16M16 2L4 18" stroke="#000" stroke-width="4"/><path d="M1 2h6M13 2h6M1 17h6M13 17h6" stroke="#000" stroke-width="2"/></svg></button>
        </div></header>
      <nav class="menubar">${["File", "Visualizza", "Strumenti", "Aiuto"].map((m) => html`<button>${m}</button>`)}</nav>

      <div class="bars">
        <div class="row">
          <div class="bar"><span class="grip first"></span>${STANDARD.map((t) => this.tool(t))}<span class="endline"></span><span class="grip"></span>${CHARTS.map((t) => this.tool(t))}<span class="endline"></span></div>
          <div class="utility"><button aria-label="Cerca">${this.icon("search", 32, 36)}</button>
            <button class="bubble" aria-label="Messaggi">${this.icon("chat", 32, 36)}<span class="badge">1</span></button></div>
        </div>
        <div class="row second">
          <div class="bar"><span class="grip first"></span>${DRAWING.map((t) => this.tool(t))}<span class="endline"></span><span class="grip"></span>
            ${PERIODS.map((p) => html`<button class=${classMap({ tool: true, period: true, pressed: p === "H4" })}>${p}</button>`)}<span class="endline"></span></div>
        </div>
      </div>

      <div class="main">
        <aside class="side">
          <section class="pane market">
            <div class="cap"><h2>Vista del mercato: 16:42:49</h2><button aria-label="Chiudi">${this.cross()}</button></div>
            <div class="frame">
              <table class="quotes"><colgroup><col class="c1" /><col class="c2" /><col /></colgroup>
                <thead><tr><th>Simbolo</th><th>Offerta</th><th>Richiesta</th></tr></thead>
                <tbody>${QUOTES.map(([s, d, b], i) => html`<tr class=${i === 0 ? "selected" : ""}><td><span class="sym">${this.icon(d, 23)}${s}</span></td><td class="bid ${d}">${b}</td><td></td></tr>`)}</tbody></table>
              <div class="scroll"><button aria-label="Scorri su"><svg width="16" height="12"><path d="M1 11l7-8 7 8" fill="none" stroke="#555" stroke-width="2"/></svg></button></div>
            </div>
            ${this.tabs([["Simboli"], ["Grafico tick"]], this.marketTab, (i) => (this.marketTab = i))}
          </section>
          <section class="pane nav">
            <div class="cap"><h2>Navigatore</h2></div>
            <div class="frame"><div class="tree">${TREE.map((n) => html`<div class="node">${n.cells.map((c) => this.cell(c))}<span class="pic">${this.icon(n.icon)}</span><span class=${classMap({ txt: true, account: n.icon === "user" })}>${n.text}</span></div>`)}</div></div>
            ${this.tabs([["Comune"], ["Preferiti"]], this.navTab, (i) => (this.navTab = i))}
          </section>
        </aside>
        <main class="work"></main>
      </div>

      <section class="terminal">
        <div class="spine"><button aria-label="Chiudi">${this.cross()}</button><h2>Terminale</h2></div>
        <div class="body">
          <div class="orders"><table>
            <colgroup><col class="w0" /><col class="w1" /><col class="w2" /><col class="w3" /><col class="w4" /><col class="w5" /><col class="w5" /><col class="w5" /><col class="w5" /><col class="w5" /><col class="w5" /><col /></colgroup>
            <thead><tr>${COLUMNS.map((c, i) => html`<th>${c}${i === 0 ? html`<span class="sort">/</span>` : nothing}</th>`)}</tr></thead>
            <tbody><tr><td colspan="11"><span class="sum"><svg width="16" height="18"><ellipse cx="8" cy="9" rx="6" ry="6" fill="#d8d8d8" stroke="#858585" stroke-width="2"/><path d="M4 13l8-8" stroke="#858585" stroke-width="2"/></svg>Saldo: 1 000 000.00 USD  Controvalore: 1 000 000.00  Margine disponibile: 1 000 000.00</span></td><td>0.00</td></tr></tbody>
          </table></div>
          ${this.tabs(TABS, this.terminalTab, (i) => (this.terminalTab = i))}
        </div>
      </section>

      <footer class="status"><span class="hint">Apri finestra grafico</span><span class="slot s0">Default</span>
        ${[1, 2, 3, 4, 5, 6].map((i) => html`<span class="slot s${i}"></span>`)}
        <span class="slot s7"><svg width="47" height="28" aria-hidden="true">${[0, 1, 2, 3, 4, 5, 6, 7].map((i) => svg`<path d=${`M${2 + i * 6} 0v${20 - i * 2}`} stroke="#5b7413" stroke-width="4"/><path d=${`M${2 + i * 6} ${22 - i * 2}v${6 + i * 2}`} stroke="#12304f" stroke-width="4"/>`)}</svg>3722/9 kb</span></footer>

      <div class="context" role="menu">${MENU.map((e) => e === null ? html`<hr class="line" />` : html`
        <button role="menuitem" class=${classMap({ entry: true, active: !!e.active })}><span class="ico">${e.icon ? this.icon(e.icon, e.size ?? 36, 36) : nothing}</span>${e.text}
          ${e.key ? html`<span class="key">${e.key}</span>` : nothing}${e.sub ? html`<span class="arrow"><svg width="8" height="12"><path d="M1 0v12l6-6z"/></svg></span>` : nothing}</button>`)}</div>
    `;
  }
}
